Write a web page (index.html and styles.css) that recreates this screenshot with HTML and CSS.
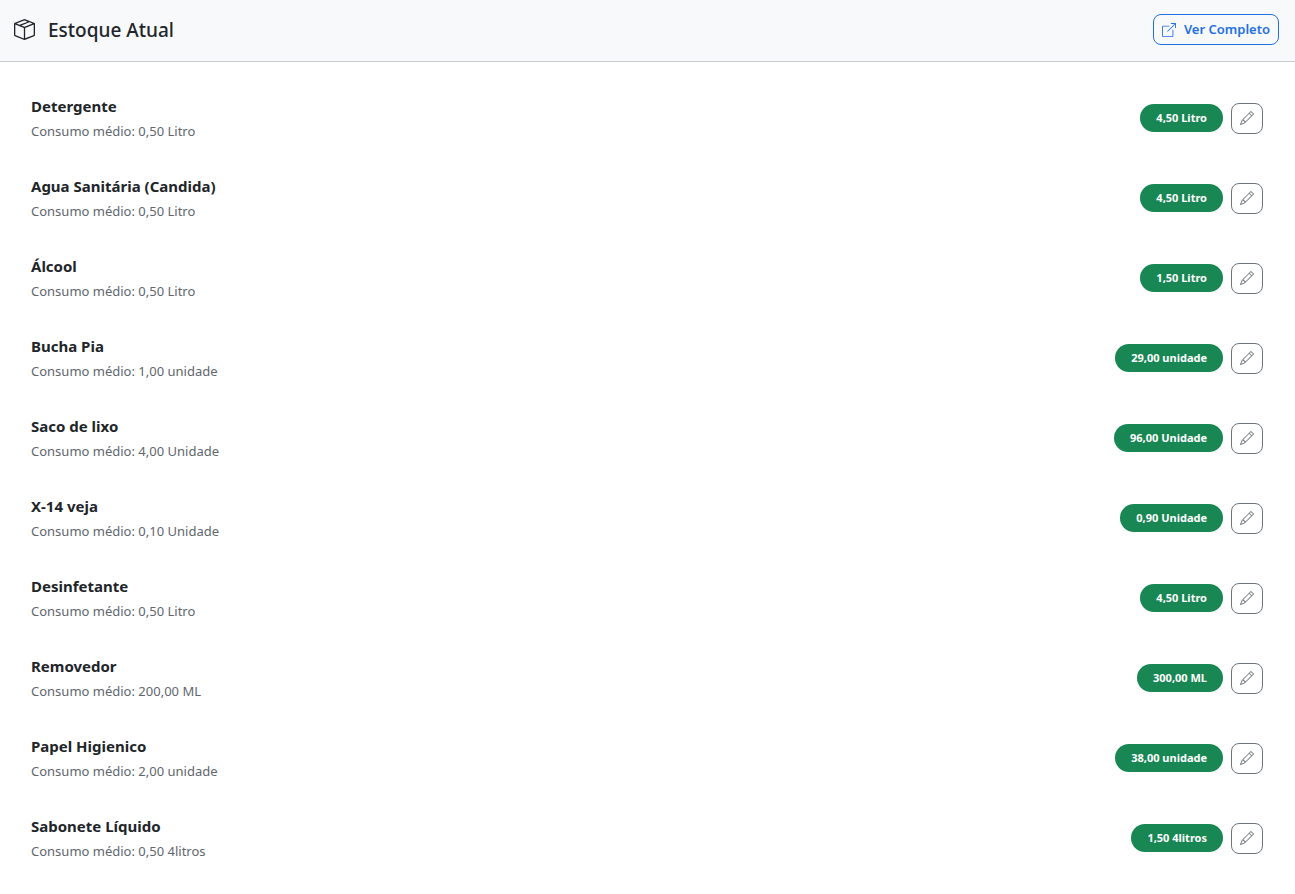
FILE: index.html
```html
<!DOCTYPE html>
<html lang="pt-BR">
<head>
    <meta charset="UTF-8">
    <meta name="viewport" content="width=device-width, initial-scale=1.0">
    <title>Estoque Atual</title>
    <link rel="stylesheet" href="styles.css">
</head>
<body>
    <!-- Icons shared by the header and the rows -->
    <svg class="icon-defs" aria-hidden="true">
        <symbol id="icon-box" viewBox="0 0 16 16">
            <path d="M8.186 1.113a.5.5 0 0 0-.372 0L1.846 3.5l2.404.961L10.404 2zm3.564 1.426L5.596 5 8 5.961 14.154 3.5zm3.25 1.7-6.5 2.6v7.922l6.5-2.6V4.24zM7.5 14.762V6.838L1 4.239v7.923zM7.443.184a1.5 1.5 0 0 1 1.114 0l7.129 2.852A.5.5 0 0 1 16 3.5v8.662a1 1 0 0 1-.629.928l-7.185 2.874a.5.5 0 0 1-.372 0L.63 13.09a1 1 0 0 1-.63-.928V3.5a.5.5 0 0 1 .314-.464z"/>
        </symbol>
        <symbol id="icon-open" viewBox="0 0 16 16">
            <path d="M8.636 3.5a.5.5 0 0 0-.5-.5H1.5A1.5 1.5 0 0 0 0 4.5v10A1.5 1.5 0 0 0 1.5 16h10a1.5 1.5 0 0 0 1.5-1.5V7.864a.5.5 0 0 0-1 0V14.5a.5.5 0 0 1-.5.5h-10a.5.5 0 0 1-.5-.5v-10a.5.5 0 0 1 .5-.5h6.636a.5.5 0 0 0 .5-.5"/>
            <path d="M16 .5a.5.5 0 0 0-.5-.5h-5a.5.5 0 0 0 0 1h3.793L6.146 9.146a.5.5 0 1 0 .708.708L15 1.707V5.5a.5.5 0 0 0 1 0z"/>
        </symbol>
        <symbol id="icon-pencil" viewBox="0 0 16 16">
            <path d="M12.146.146a.5.5 0 0 1 .708 0l3 3a.5.5 0 0 1 0 .708l-10 10a.5.5 0 0 1-.168.11l-5 2a.5.5 0 0 1-.65-.65l2-5a.5.5 0 0 1 .11-.168zM11.207 2.5 13.5 4.793 14.793 3.5 12.5 1.207zm1.586 3L10.5 3.207 4 9.707V10h.5a.5.5 0 0 1 .5.5v.5h.5a.5.5 0 0 1 .5.5v.5h.293zm-9.761 5.175-.106.106-1.528 3.821 3.821-1.528.106-.106A.5.5 0 0 1 5 12.5V12h-.5a.5.5 0 0 1-.5-.5V11h-.5a.5.5 0 0 1-.468-.325"/>
        </symbol>
    </svg>

    <header class="card-header">
        <h1 class="card-title">
            <svg class="title-icon" aria-hidden="true"><use href="#icon-box"/></svg>
            Estoque Atual
        </h1>
        <a href="#" class="btn btn-primary">
            <svg class="btn-icon" aria-hidden="true"><use href="#icon-open"/></svg>
            Ver Completo
        </a>
    </header>

    <ul class="stock-list">
        <li class="stock-item">
            <div>
                <h2 class="item-name">Detergente</h2>
                <p class="item-usage">Consumo médio: 0,50 Litro</p>
            </div>
            <div class="item-actions">
                <span class="badge">4,50 Litro</span>
                <button type="button" class="btn btn-secondary" aria-label="Editar"><svg class="btn-icon" aria-hidden="true"><use href="#icon-pencil"/></svg></button>
            </div>
        </li>
        <li class="stock-item">
            <div>
                <h2 class="item-name">Agua Sanitária (Candida)</h2>
                <p class="item-usage">Consumo médio: 0,50 Litro</p>
            </div>
            <div class="item-actions">
                <span class="badge">4,50 Litro</span>
                <button type="button" class="btn btn-secondary" aria-label="Editar"><svg class="btn-icon" aria-hidden="true"><use href="#icon-pencil"/></svg></button>
            </div>
        </li>
        <li class="stock-item">
            <div>
                <h2 class="item-name">Álcool</h2>
                <p class="item-usage">Consumo médio: 0,50 Litro</p>
            </div>
            <div class="item-actions">
                <span class="badge">1,50 Litro</span>
                <button type="button" class="btn btn-secondary" aria-label="Editar"><svg class="btn-icon" aria-hidden="true"><use href="#icon-pencil"/></svg></button>
            </div>
        </li>
        <li class="stock-item">
            <div>
                <h2 class="item-name">Bucha Pia</h2>
                <p class="item-usage">Consumo médio: 1,00 unidade</p>
            </div>
            <div class="item-actions">
                <span class="badge">29,00 unidade</span>
                <button type="button" class="btn btn-secondary" aria-label="Editar"><svg class="btn-icon" aria-hidden="true"><use href="#icon-pencil"/></svg></button>
            </div>
        </li>
        <li class="stock-item">
            <div>
                <h2 class="item-name">Saco de lixo</h2>
                <p class="item-usage">Consumo médio: 4,00 Unidade</p>
            </div>
            <div class="item-actions">
                <span class="badge">96,00 Unidade</span>
                <button type="button" class="btn btn-secondary" aria-label="Editar"><svg class="btn-icon" aria-hidden="true"><use href="#icon-pencil"/></svg></button>
            </div>
        </li>
        <li class="stock-item">
            <div>
                <h2 class="item-name">X-14 veja</h2>
                <p class="item-usage">Consumo médio: 0,10 Unidade</p>
            </div>
            <div class="item-actions">
                <span class="badge">0,90 Unidade</span>
                <button type="button" class="btn btn-secondary" aria-label="Editar"><svg class="btn-icon" aria-hidden="true"><use href="#icon-pencil"/></svg></button>
            </div>
        </li>
        <li class="stock-item">
            <div>
                <h2 class="item-name">Desinfetante</h2>
                <p class="item-usage">Consumo médio: 0,50 Litro</p>
            </div>
            <div class="item-actions">
                <span class="badge">4,50 Litro</span>
                <button type="button" class="btn btn-secondary" aria-label="Editar"><svg class="btn-icon" aria-hidden="true"><use href="#icon-pencil"/></svg></button>
            </div>
        </li>
        <li class="stock-item">
            <div>
                <h2 class="item-name">Removedor</h2>
                <p class="item-usage">Consumo médio: 200,00 ML</p>
            </div>
            <div class="item-actions">
                <span class="badge">300,00 ML</span>
                <button type="button" class="btn btn-secondary" aria-label="Editar"><svg class="btn-icon" aria-hidden="true"><use href="#icon-pencil"/></svg></button>
            </div>
        </li>
        <li class="stock-item">
            <div>
                <h2 class="item-name">Papel Higienico</h2>
                <p class="item-usage">Consumo médio: 2,00 unidade</p>
            </div>
            <div class="item-actions">
                <span class="badge">38,00 unidade</span>
                <button type="button" class="btn btn-secondary" aria-label="Editar"><svg class="btn-icon" aria-hidden="true"><use href="#icon-pencil"/></svg></button>
            </div>
        </li>
        <li class="stock-item">
            <div>
                <h2 class="item-name">Sabonete Líquido</h2>
                <p class="item-usage">Consumo médio: 0,50 4litros</p>
            </div>
            <div class="item-actions">
                <span class="badge">1,50 4litros</span>
                <button type="button" class="btn btn-secondary" aria-label="Editar"><svg class="btn-icon" aria-hidden="true"><use href="#icon-pencil"/></svg></button>
            </div>
        </li>
    </ul>
</body>
</html>
```
FILE: styles.css
```css
* {
    box-sizing: border-box;
}
body {
    margin: 0;
    font-family: 'Segoe UI', 'Noto Sans', 'Open Sans', sans-serif;
    font-size: 16px;
    line-height: 24px;
    color: #212529;
    background-color: #fff;
}
h1, h2, p, ul {
    margin: 0;
    padding: 0;
}
svg {
    fill: currentColor;
}
.icon-defs {
    display: none;
}
.card-header {
    display: flex;
    justify-content: space-between;
    align-items: center;
    padding: 14px 16px 16px 14px;
    background-color: #f8f9fb;
    border-bottom: 1px solid #c9cbd2;
}
.card-title {
    display: flex;
    align-items: center;
    gap: 13px;
    font-size: 19px;
    font-weight: 500;
}
.title-icon {
    width: 21px;
    height: 21px;
}
.btn {
    display: inline-flex;
    align-items: center;
    gap: 8px;
    padding: 4px 8px;
    border: 1px solid;
    border-radius: 8px;
    background-color: transparent;
    font-family: inherit;
    font-size: 13px;
    font-weight: 600;
    line-height: 21px;
    text-decoration: none;
    cursor: pointer;
}
.btn-primary {
    color: #1f6fe5;
}
.btn-primary:hover {
    color: #fff;
    background-color: #1f6fe5;
}
.btn-secondary {
    height: 31px;
    color: #6c757d;
}
.btn-secondary:hover {
    color: #fff;
    background-color: #6c757d;
}
.btn-icon {
    width: 14px;
    height: 14px;
}
.stock-list {
    padding: 16px 32px 16px 31px;
    list-style: none;
}
.stock-item {
    display: flex;
    justify-content: space-between;
    align-items: center;
    padding: 16px 0;
}
.item-name {
    font-size: 15px;
    font-weight: 700;
    line-height: 24px;
}
.item-usage {
    margin-top: 2px;
    font-size: 13px;
    line-height: 22px;
    color: #5f666d;
}
.item-actions {
    display: flex;
    align-items: center;
    gap: 8px;
}
.badge {
    padding: 8px 16px;
    border-radius: 14px;
    background-color: #198754;
    color: #fff;
    font-size: 11px;
    font-weight: 700;
    line-height: 12px;
}
```
